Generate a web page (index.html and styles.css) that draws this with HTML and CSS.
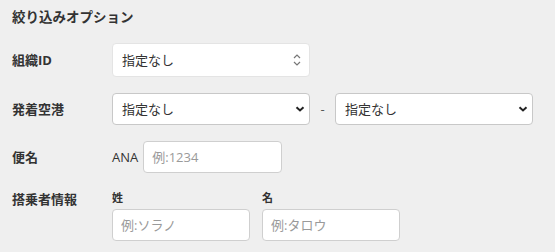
FILE: index.html
```html
<!DOCTYPE html>
<html lang="ja">
<head>
  <meta charset="UTF-8" />
  <title>絞り込みオプション</title>
  <link rel="stylesheet" href="styles.css">
</head>
<body>
  <div class="panel">
    <h3 class="panel-title">絞り込みオプション</h3>

    <div class="row">
      <label class="row-label" for="orgId">組織ID</label>
      <div class="field">
        <div class="select-wrap org">
          <select id="orgId">
            <option value="">指定なし</option>
          </select>
          <svg class="updown" viewBox="0 0 8 14">
            <path d="M1 5 L4 2 L7 5 M1 9 L4 12 L7 9" />
          </svg>
        </div>
      </div>
    </div>

    <div class="row">
      <label class="row-label" for="fromAirport">発着空港</label>
      <div class="field">
        <div class="select-wrap airport">
          <select id="fromAirport">
            <option value="">指定なし</option>
          </select>
          <svg class="chevron" viewBox="0 0 10 6">
            <path d="M1.5 1.2 L5 4.5 L8.5 1.2" />
          </svg>
        </div>
        <span class="dash">-</span>
        <div class="select-wrap airport">
          <select id="toAirport">
            <option value="">指定なし</option>
          </select>
          <svg class="chevron" viewBox="0 0 10 6">
            <path d="M1.5 1.2 L5 4.5 L8.5 1.2" />
          </svg>
        </div>
      </div>
    </div>

    <div class="row">
      <label class="row-label" for="flightNo">便名</label>
      <div class="field">
        <span class="prefix">ANA</span>
        <input type="text" id="flightNo" class="flight" placeholder="例:1234">
      </div>
    </div>

    <div class="row top">
      <span class="row-label">搭乗者情報</span>
      <div class="field names">
        <div class="name-col">
          <label class="sub-label" for="lastName">姓</label>
          <input type="text" id="lastName" placeholder="例:ソラノ">
        </div>
        <div class="name-col">
          <label class="sub-label" for="firstName">名</label>
          <input type="text" id="firstName" placeholder="例:タロウ">
        </div>
      </div>
    </div>
  </div>
</body>
</html>
```

FILE: styles.css
```css
body {
  margin: 0;
  background-color: #efefef;
  color: #333;
  font-family: "Open Sans", "Noto Sans CJK JP", sans-serif;
  font-size: 13px;
}

.panel {
  padding: 9px 12px 0;
}

.panel-title {
  margin: 0 0 17px;
  font-size: 13.5px;
  line-height: 17px;
  font-weight: bold;
  color: #333;
}

.row {
  display: flex;
  align-items: center;
  margin-bottom: 16px;
}

.row:last-child {
  margin-bottom: 0;
}

.row.top {
  align-items: flex-start;
}

.row-label {
  width: 100px;
  flex-shrink: 0;
  font-weight: bold;
  line-height: 18px;
}

.row.top .row-label {
  margin-top: 1px;
}

.field {
  display: flex;
  align-items: center;
}

.select-wrap {
  position: relative;
}

select, input {
  font-family: inherit;
  font-size: 13px;
  color: #333;
  background: #fff;
  border: 1px solid #d6d6d6;
  border-radius: 4px;
  box-sizing: border-box;
  outline: none;
}

select {
  appearance: none;
  -webkit-appearance: none;
  padding: 0 24px 0 9px;
}

.org select {
  width: 198px;
  height: 34px;
  border-color: #e4e4e4;
}

.airport select {
  width: 198px;
  height: 32px;
  border-color: #c8c8c8;
}

.updown {
  position: absolute;
  right: 9px;
  top: 10px;
  width: 8px;
  height: 14px;
  fill: none;
  stroke: #777;
  stroke-width: 1.2;
}

.chevron {
  position: absolute;
  right: 5px;
  top: 13px;
  width: 10px;
  height: 6px;
  fill: none;
  stroke: #222;
  stroke-width: 2;
}

.dash {
  width: 25px;
  text-align: center;
  color: #555;
}

.prefix {
  margin-right: 5px;
}

input {
  height: 32px;
  width: 138px;
  padding: 0 8px;
  border-color: #cfcfcf;
}

input::placeholder {
  color: #9a9a9a;
}

.flight {
  width: 139px;
}

.names {
  align-items: flex-start;
  gap: 12px;
}

.name-col {
  display: flex;
  flex-direction: column;
}

.sub-label {
  font-size: 11px;
  font-weight: bold;
  line-height: 18px;
  margin-bottom: 2px;
}
```
